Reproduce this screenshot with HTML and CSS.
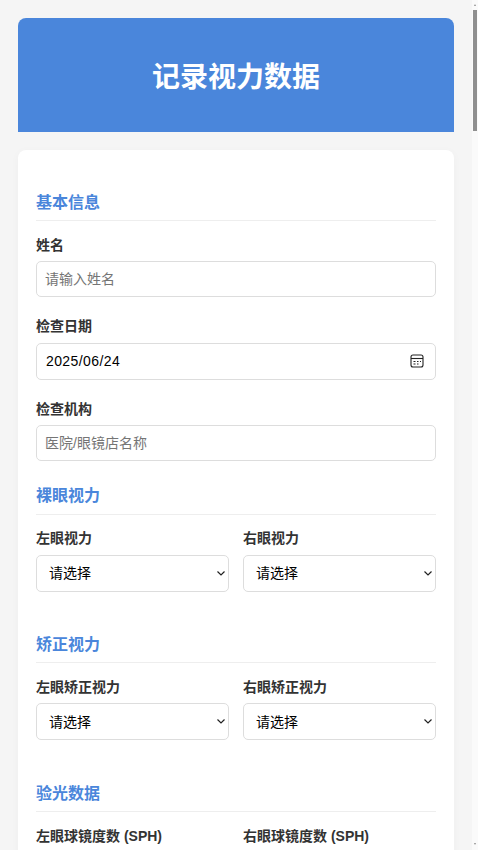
FILE: index.html
```html
<!DOCTYPE html>
<html lang="zh-CN">
<head>
  <meta charset="UTF-8">
  <meta name="viewport" content="width=device-width, initial-scale=1.0">
  <title>记录视力数据</title>
  <link rel="stylesheet" href="styles.css">
</head>
<body>

  <header class="page-header">
    <h1>记录视力数据</h1>
  </header>

  <form class="card">
    <section class="section">
      <h2>基本信息</h2>
      <div class="field">
        <label>姓名</label>
        <input class="text-input" type="text" placeholder="请输入姓名">
      </div>
      <div class="field">
        <label>检查日期</label>
        <div class="date-input">
          <input type="text" value="2025/06/24">
          <svg width="14" height="14" viewBox="0 0 14 14" fill="none" stroke="#222" stroke-width="1.1">
            <rect x="1" y="1" width="12" height="12" rx="2"/>
            <path d="M1 4.500h12"/>
            <path d="M3.500 7.500h2M7 7.500h1.500M10 7.500h1M3.500 10h2M7 10h1.500" stroke-width="1.2"/>
          </svg>
        </div>
      </div>
      <div class="field">
        <label>检查机构</label>
        <input class="text-input" type="text" placeholder="医院/眼镜店名称">
      </div>
    </section>

    <section class="section">
      <h2>裸眼视力</h2>
      <div class="row">
        <div class="field">
          <label>左眼视力</label>
          <select><option>请选择</option></select>
        </div>
        <div class="field">
          <label>右眼视力</label>
          <select><option>请选择</option></select>
        </div>
      </div>
    </section>

    <section class="section">
      <h2>矫正视力</h2>
      <div class="row">
        <div class="field">
          <label>左眼矫正视力</label>
          <select><option>请选择</option></select>
        </div>
        <div class="field">
          <label>右眼矫正视力</label>
          <select><option>请选择</option></select>
        </div>
      </div>
    </section>

    <section class="section">
      <h2>验光数据</h2>
      <div class="row">
        <div class="field">
          <label>左眼球镜度数 (SPH)</label>
          <select><option>请选择</option></select>
        </div>
        <div class="field">
          <label>右眼球镜度数 (SPH)</label>
          <select><option>请选择</option></select>
        </div>
      </div>
    </section>
  </form>

  <div class="scrollbar">
    <span class="arrow-up"></span>
    <span class="thumb"></span>
    <span class="arrow-down"></span>
  </div>

</body>
</html>
```

FILE: styles.css
```css
html {
  background-color: #f5f5f5;
  overflow: hidden;
}
body {
  font-family: "Liberation Sans", "Noto Sans CJK SC", sans-serif;
  margin: 0;
  padding: 18px 24px 18px 18px;
  color: #333;
}
.page-header {
  background-color: #4a86db;
  border-radius: 8px 8px 0 0;
  height: 114px;
  display: flex;
  align-items: center;
  justify-content: center;
  margin-bottom: 18px;
}
.page-header h1 {
  margin: 0;
  font-size: 28px;
  font-weight: 700;
  color: #fff;
}
.card {
  background-color: #fff;
  border-radius: 8px;
  padding: 40px 18px 18px;
  box-shadow: 0 2px 10px rgba(0, 0, 0, 0.03);
}
.section {
  padding-bottom: 3px;
}
.section h2 {
  font-size: 16px;
  font-weight: 700;
  color: #4a86db;
  margin: 0 0 13.8px;
  padding: 0.5px 0 5.5px;
  line-height: 24px;
  border-bottom: 1px solid #eee;
}
.field {
  margin-bottom: 19.3px;
}
.field label {
  display: block;
  font-size: 14px;
  font-weight: 700;
  line-height: 20px;
  margin-bottom: 6.3px;
}
.text-input {
  display: block;
  box-sizing: border-box;
  width: 100%;
  height: 36px;
  padding: 0 8px;
  font: inherit;
  font-size: 14px;
  color: #000;
  background: #fff;
  border: 1px solid #ddd;
  border-radius: 5px;
}
.text-input::placeholder {
  color: #757575;
}
.date-input {
  box-sizing: border-box;
  height: 37px;
  display: flex;
  align-items: center;
  padding: 0 11px 0 9px;
  border: 1px solid #ddd;
  border-radius: 5px;
}
.date-input input {
  flex: 1;
  min-width: 0;
  border: none;
  padding: 0;
  font: inherit;
  font-size: 14px;
  letter-spacing: 0.4px;
  color: #000;
}
select {
  display: block;
  box-sizing: border-box;
  width: 100%;
  height: 37px;
  padding: 0 12px;
  font: inherit;
  font-size: 14px;
  color: #000;
  border: 1px solid #ddd;
  border-radius: 5px;
  appearance: none;
  background: #fff url("data:image/svg+xml,%3Csvg xmlns='http://www.w3.org/2000/svg' width='8' height='5' fill='none' stroke='%23222' stroke-width='1.2'%3E%3Cpath d='M.5.5 4 4 7.500.5'/%3E%3C/svg%3E") no-repeat right 3px center;
}
.row {
  display: grid;
  grid-template-columns: 1fr 1fr;
  gap: 14px;
  margin-bottom: 18.4px;
}
.scrollbar {
  position: fixed;
  top: 0;
  right: 0;
  bottom: 0;
  width: 6px;
  background-color: #fafafa;
}
.thumb {
  position: absolute;
  top: 10px;
  left: 1px;
  width: 4px;
  height: 121px;
  background-color: #8f8f8f;
}
.arrow-up,
.arrow-down {
  position: absolute;
  left: 2px;
  width: 0;
  height: 0;
  border-left: 1.5px solid transparent;
  border-right: 1.5px solid transparent;
}
.arrow-up {
  top: 4px;
  border-bottom: 2px solid #8f8f8f;
}
.arrow-down {
  bottom: 5px;
  border-top: 2px solid #8f8f8f;
}
```
